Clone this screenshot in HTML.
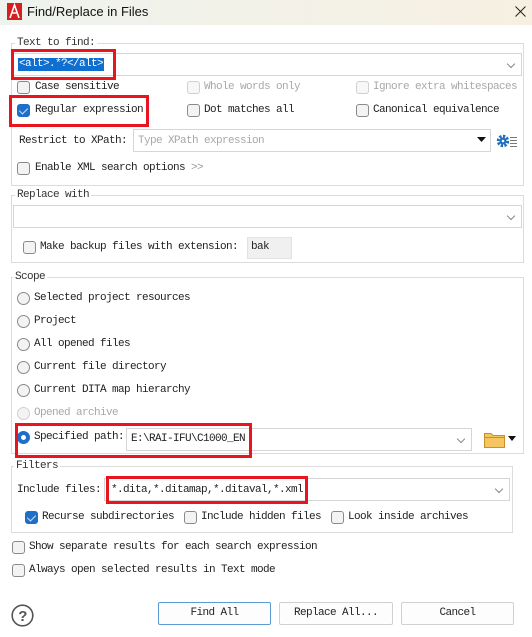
<!DOCTYPE html>
<html><head><meta charset="utf-8"><style>
*{box-sizing:border-box;margin:0;padding:0}
body{width:532px;height:637px;background:#fff;position:relative;overflow:hidden;font-family:"Liberation Mono",monospace;font-size:11px;letter-spacing:-0.6px;color:#222}
.a{position:absolute}
.t{position:absolute;line-height:14px;white-space:nowrap}
.grp{position:absolute;border:1px solid #dcdcdc}
.lbl{position:absolute;background:#fff;padding:0 2px;line-height:12px;color:#333}
.cb{position:absolute;width:13px;height:13px;border:1px solid #8a8a8a;border-radius:3px;background:#f3f3f3}
.cb.dis{border-color:#d0d0d0;background:#f7f7f7}
.cb.on{background:#1d6fc8;border-color:#1d6fc8}
.cb.on:after{content:"";position:absolute;left:3px;top:1px;width:4px;height:7px;border:solid #cfe0f5;border-width:0 1.5px 1.5px 0;transform:rotate(45deg)}
.rd{position:absolute;width:13px;height:13px;border:1px solid #8a8a8a;border-radius:50%;background:#f3f3f3}
.rd.dis{border-color:#d0d0d0}
.rd.on{border:4px solid #1d6fc8;background:#fff}
.combo{position:absolute;border:1px solid #d6d6d6;background:#fff}
.chev{position:absolute;right:7px;top:7px;width:6px;height:6px;border:solid #888;border-width:0 1px 1px 0;transform:rotate(45deg)}
.red{position:absolute;border:3px solid #e8141e}
.dis-t{color:#a8a8a8}
.btn{position:absolute;height:23px;border:1px solid #d0d0d0;border-radius:2px;background:#fdfdfd;text-align:center;line-height:21px}
</style></head><body>
<div class="a" style="left:0;top:0;width:532px;height:25px;background:linear-gradient(90deg,#eef3ee,#f7f0e2)"></div>
<svg class="a" style="left:7px;top:3px" width="15" height="17" viewBox="0 0 15 17"><rect width="15" height="17" fill="#d42020"/><path d="M3 15 L7.5 2 L12 15 M4.5 10 H10.5" stroke="#fff" stroke-width="1.6" fill="none"/></svg>
<div class="t" style="left:27px;top:4px;font-family:'Liberation Sans',sans-serif;font-size:13px;letter-spacing:0;line-height:16px;color:#111">Find/Replace in Files</div>
<svg class="a" style="left:515px;top:6px" width="11" height="11"><path d="M0.5 0.5 L10.5 10.5 M10.5 0.5 L0.5 10.5" stroke="#222" stroke-width="1"/></svg>

<div class="grp" style="left:11px;top:43px;width:513px;height:143px"></div>
<div class="lbl" style="left:15px;top:37px">Text to find:</div>
<div class="combo" style="left:13px;top:53px;width:509px;height:23px"><div class="chev"></div></div>
<div class="t" style="left:18px;top:58px;background:#0f6fd0;color:#fff;padding:0 1px;line-height:13px">&lt;alt&gt;.*?&lt;/alt&gt;</div>
<div class="red" style="left:11px;top:49px;width:105px;height:31px"></div>
<div class="cb" style="left:17px;top:81px"></div><div class="t" style="left:35px;top:80px">Case sensitive</div>
<div class="cb dis" style="left:187px;top:81px"></div><div class="t dis-t" style="left:204px;top:80px">Whole words only</div>
<div class="cb dis" style="left:356px;top:81px"></div><div class="t dis-t" style="left:373px;top:80px">Ignore extra whitespaces</div>
<div class="cb on" style="left:17px;top:104px"></div><div class="t" style="left:35px;top:103px">Regular expression</div>
<div class="red" style="left:9px;top:95px;width:140px;height:32px"></div>
<div class="cb" style="left:187px;top:104px"></div><div class="t" style="left:204px;top:103px">Dot matches all</div>
<div class="cb" style="left:356px;top:104px"></div><div class="t" style="left:373px;top:103px">Canonical equivalence</div>
<div class="t" style="left:19px;top:134px">Restrict to XPath:</div>
<div class="combo" style="left:133px;top:129px;width:358px;height:23px"></div>
<div class="t dis-t" style="left:138px;top:134px">Type XPath expression</div>
<svg class="a" style="left:477px;top:137px" width="9" height="6"><path d="M0 0 H9 L4.5 5Z" fill="#111"/></svg>
<svg class="a" style="left:496px;top:134px" width="23" height="14" viewBox="0 0 23 14"><circle cx="7" cy="7" r="4.5" fill="none" stroke="#1e6fc0" stroke-width="3.5" stroke-dasharray="2.2 1.3"/><circle cx="7" cy="7" r="3.5" fill="#1e6fc0"/><circle cx="7" cy="7" r="1.3" fill="#fff"/><path d="M14 3.5H21M14 6.5H21M14 9.5H21M14 12.5H21" stroke="#777" stroke-width="1"/></svg>
<div class="cb" style="left:17px;top:162px"></div><div class="t" style="left:35px;top:161px">Enable XML search options <span style="color:#999">&gt;&gt;</span></div>

<div class="grp" style="left:11px;top:195px;width:513px;height:68px"></div>
<div class="lbl" style="left:15px;top:189px">Replace with</div>
<div class="combo" style="left:13px;top:205px;width:509px;height:23px"><div class="chev"></div></div>
<div class="cb" style="left:23px;top:241px"></div><div class="t" style="left:40px;top:240px">Make backup files with extension:</div>
<div class="a" style="left:247px;top:237px;width:45px;height:22px;background:#f0f0f0;border:1px solid #e2e2e2"></div>
<div class="t" style="left:251px;top:240px">bak</div>

<div class="grp" style="left:11px;top:277px;width:513px;height:177px"></div>
<div class="lbl" style="left:13px;top:271px">Scope</div>
<div class="rd" style="left:17px;top:292px"></div><div class="t" style="left:34px;top:291px">Selected project resources</div>
<div class="rd" style="left:17px;top:315px"></div><div class="t" style="left:34px;top:314px">Project</div>
<div class="rd" style="left:17px;top:338px"></div><div class="t" style="left:34px;top:337px">All opened files</div>
<div class="rd" style="left:17px;top:361px"></div><div class="t" style="left:34px;top:360px">Current file directory</div>
<div class="rd" style="left:17px;top:384px"></div><div class="t" style="left:34px;top:383px">Current DITA map hierarchy</div>
<div class="rd dis" style="left:17px;top:407px"></div><div class="t dis-t" style="left:34px;top:406px">Opened archive</div>
<div class="rd on" style="left:17px;top:431px"></div><div class="t" style="left:34px;top:430px">Specified path:</div>
<div class="combo" style="left:126px;top:428px;width:346px;height:23px"><div class="chev"></div></div>
<div class="t" style="left:131px;top:432px">E:\RAI-IFU\C1000_EN</div>
<div class="red" style="left:15px;top:423px;width:237px;height:35px"></div>
<svg class="a" style="left:484px;top:431px" width="21" height="17" viewBox="0 0 21 17"><path d="M0.5 2.5 H7 L9 4.5 H20.5 V16.5 H0.5Z" fill="#f5c560" stroke="#c8902a"/><path d="M0.5 6.5 H20.5" stroke="#c8902a"/></svg>
<svg class="a" style="left:508px;top:436px" width="8" height="5"><path d="M0 0 H8 L4 5Z" fill="#111"/></svg>

<div class="grp" style="left:11px;top:466px;width:502px;height:67px"></div>
<div class="lbl" style="left:14px;top:460px">Filters</div>
<div class="t" style="left:17px;top:483px">Include files:</div>
<div class="combo" style="left:104px;top:478px;width:406px;height:23px"><div class="chev"></div></div>
<div class="t" style="left:111px;top:483px">*.dita,*.ditamap,*.ditaval,*.xml</div>
<div class="red" style="left:106px;top:476px;width:202px;height:28px"></div>
<div class="cb on" style="left:25px;top:511px"></div><div class="t" style="left:42px;top:510px">Recurse subdirectories</div>
<div class="cb" style="left:184px;top:511px"></div><div class="t" style="left:201px;top:510px">Include hidden files</div>
<div class="cb" style="left:331px;top:511px"></div><div class="t" style="left:348px;top:510px">Look inside archives</div>

<div class="cb" style="left:12px;top:541px"></div><div class="t" style="left:29px;top:540px">Show separate results for each search expression</div>
<div class="cb" style="left:12px;top:564px"></div><div class="t" style="left:29px;top:563px">Always open selected results in Text mode</div>

<svg class="a" style="left:11px;top:604px" width="23" height="23" viewBox="0 0 23 23"><circle cx="11.5" cy="11.5" r="10.3" fill="none" stroke="#555" stroke-width="1.6"/><text x="11.5" y="17" text-anchor="middle" font-family="Liberation Sans" font-weight="bold" font-size="15" fill="#555">?</text></svg>
<div class="btn" style="left:158px;top:602px;width:113px;border-color:#5b9bd5">Find All</div>
<div class="btn" style="left:279px;top:602px;width:114px">Replace All...</div>
<div class="btn" style="left:401px;top:602px;width:113px">Cancel</div>
</body></html>
